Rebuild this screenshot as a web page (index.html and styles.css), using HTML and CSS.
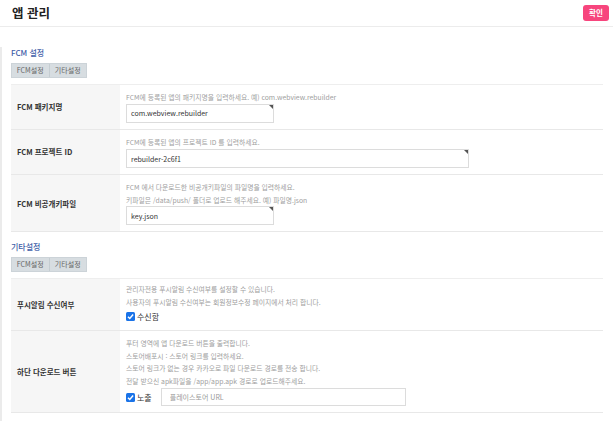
FILE: index.html
```html
<!DOCTYPE html>
<html lang="ko">
<head>
<meta charset="utf-8">
<title>앱 관리</title>
<link rel="stylesheet" href="styles.css">
</head>
<body>
<header class="top">
  <h1 class="title">앱 관리</h1>
  <button class="btn-ok" type="button">확인</button>
</header>
<main class="content">
  <section class="group first">
    <h2 class="group-title">FCM 설정</h2>
    <div class="tabs"><span class="tab">FCM설정</span><span class="tab">기타설정</span></div>
    <div class="form">
      <div class="row r1">
        <div class="label">FCM 패키지명</div>
        <div class="cell">
          <p class="help">FCM에 등록된 앱의 패키지명을 입력하세요. 예) com.webview.rebuilder</p>
          <div class="field short"><input class="input" type="text" value="com.webview.rebuilder"></div>
        </div>
      </div>
      <div class="row r2">
        <div class="label">FCM 프로젝트 ID</div>
        <div class="cell">
          <p class="help">FCM에 등록된 앱의 프로젝트 ID 를 입력하세요.</p>
          <div class="field long"><input class="input" type="text" value="rebuilder-2c6f1"></div>
        </div>
      </div>
      <div class="row r3">
        <div class="label">FCM 비공개키파일</div>
        <div class="cell">
          <p class="help">FCM 에서 다운로드한 비공개키파일의 파일명을 입력하세요.<br>키파일은 /data/push/ 폴더로 업로드 해주세요. 예) 파일명.json</p>
          <div class="field short"><input class="input" type="text" value="key.json"></div>
        </div>
      </div>
    </div>
  </section>
  <section class="group second">
    <h2 class="group-title">기타설정</h2>
    <div class="tabs"><span class="tab">FCM설정</span><span class="tab">기타설정</span></div>
    <div class="form">
      <div class="row r4">
        <div class="label">푸시알림 수신여부</div>
        <div class="cell">
          <p class="help">관리자전용 푸시알림 수신여부를 설정할 수 있습니다.<br>사용자의 푸시알림 수신여부는 회원정보수정 페이지에서 처리 합니다.</p>
          <label class="check"><span class="box"><svg viewBox="0 0 10 10" width="9" height="9"><path d="M2.2 5.2 L4.2 7.2 L7.9 2.8" fill="none" stroke="#fff" stroke-width="1.6"/></svg></span>수신함</label>
        </div>
      </div>
      <div class="row r5">
        <div class="label">하단 다운로드 버튼</div>
        <div class="cell">
          <p class="help">푸터 영역에 앱 다운로드 버튼을 출력합니다.<br>스토어배포시 : 스토어 링크를 입력하세요.<br>스토어 링크가 없는 경우 카카오로 파일 다운로드 경로를 전송 합니다.<br>전달 받으신 apk파일을 /app/app.apk 경로로 업로드해주세요.</p>
          <div class="inline">
            <label class="check"><span class="box"><svg viewBox="0 0 10 10" width="9" height="9"><path d="M2.2 5.2 L4.2 7.2 L7.9 2.8" fill="none" stroke="#fff" stroke-width="1.6"/></svg></span>노출</label>
            <input class="input url" type="text" placeholder="플레이스토어 URL">
          </div>
        </div>
      </div>
    </div>
  </section>
</main>
</body>
</html>
```
FILE: styles.css
```css
* { box-sizing: border-box; }
html, body { margin: 0; background: #fff; }
body {
  font-family: "Noto Sans CJK KR", "Noto Sans", sans-serif;
  color: #333;
}
.top {
  height: 27px;
  display: flex;
  align-items: center;
  justify-content: space-between;
  padding: 0 4px 0 12px;
  border-bottom: 1px solid #ececec;
}
.title {
  margin: 0;
  font-size: 12.5px;
  font-weight: 700;
  color: #222;
  line-height: 16px;
}
.btn-ok {
  width: 26px;
  height: 16px;
  border: 0;
  border-radius: 3px;
  background: #f7457d;
  color: #fff;
  font-family: inherit;
  font-size: 7.5px;
  font-weight: 700;
  padding: 0;
  line-height: 16px;
}
.content {
  border-left: 2px solid #ebebeb;
  padding: 0 10px 20px 9px;
}
.group-title {
  margin: 0 0 4px;
  font-size: 8px;
  line-height: 12px;
  font-weight: 500;
  color: #3f5ea8;
}
.first .group-title { margin-top: 20px; }
.second .group-title { margin-top: 9px; }
.tabs {
  display: flex;
  width: 76px;
  height: 15px;
  background: #d7dde1;
  border: 1px solid #ccd3d8;
}
.tab {
  flex: 1;
  text-align: center;
  font-size: 7px;
  line-height: 13px;
  color: #666;
}
.tab + .tab { border-left: 1px solid #c5cdd2; }
.form {
  margin-top: 6px;
  border-top: 1px solid #eeeeee;
}
.row {
  display: grid;
  grid-template-columns: 109px 1fr;
  border-bottom: 1px solid #e8e8e8;
}
.label {
  background: #f6f6f6;
  display: flex;
  align-items: center;
  padding-left: 6px;
  font-size: 7.5px;
  font-weight: 700;
  color: #333;
}
.cell {
  padding: 6px 6px;
}
.help {
  margin: 0;
  font-size: 6.8px;
  line-height: 12.5px;
  color: #a0a0a0;
}
.field {
  position: relative;
  height: 19px;
}
.field.short { width: 148px; }
.field.long { width: 343px; margin-top: 1px; }
.field::after {
  content: "";
  position: absolute;
  top: 1px;
  right: 1px;
  width: 0;
  height: 0;
  border-top: 4px solid #555;
  border-left: 4px solid transparent;
}
.input {
  display: block;
  width: 100%;
  height: 19px;
  border: 1px solid #dcdcdc;
  background: #fff;
  padding: 0 4px;
  font-family: inherit;
  font-size: 7px;
  color: #333;
  outline: none;
}
.input::placeholder { color: #999; }
.r4 .cell { padding-top: 4px; }
.check {
  display: flex;
  align-items: center;
  height: 16px;
  font-size: 8px;
  color: #333;
  gap: 2px;
}
.box {
  width: 9px;
  height: 9px;
  border-radius: 1.5px;
  background: #1a73e8;
  display: inline-flex;
}
.inline {
  display: flex;
  align-items: center;
  gap: 9px;
  margin-top: 1px;
}
.input.url {
  width: 245px;
  height: 18px;
  padding: 0 8px;
}
```
